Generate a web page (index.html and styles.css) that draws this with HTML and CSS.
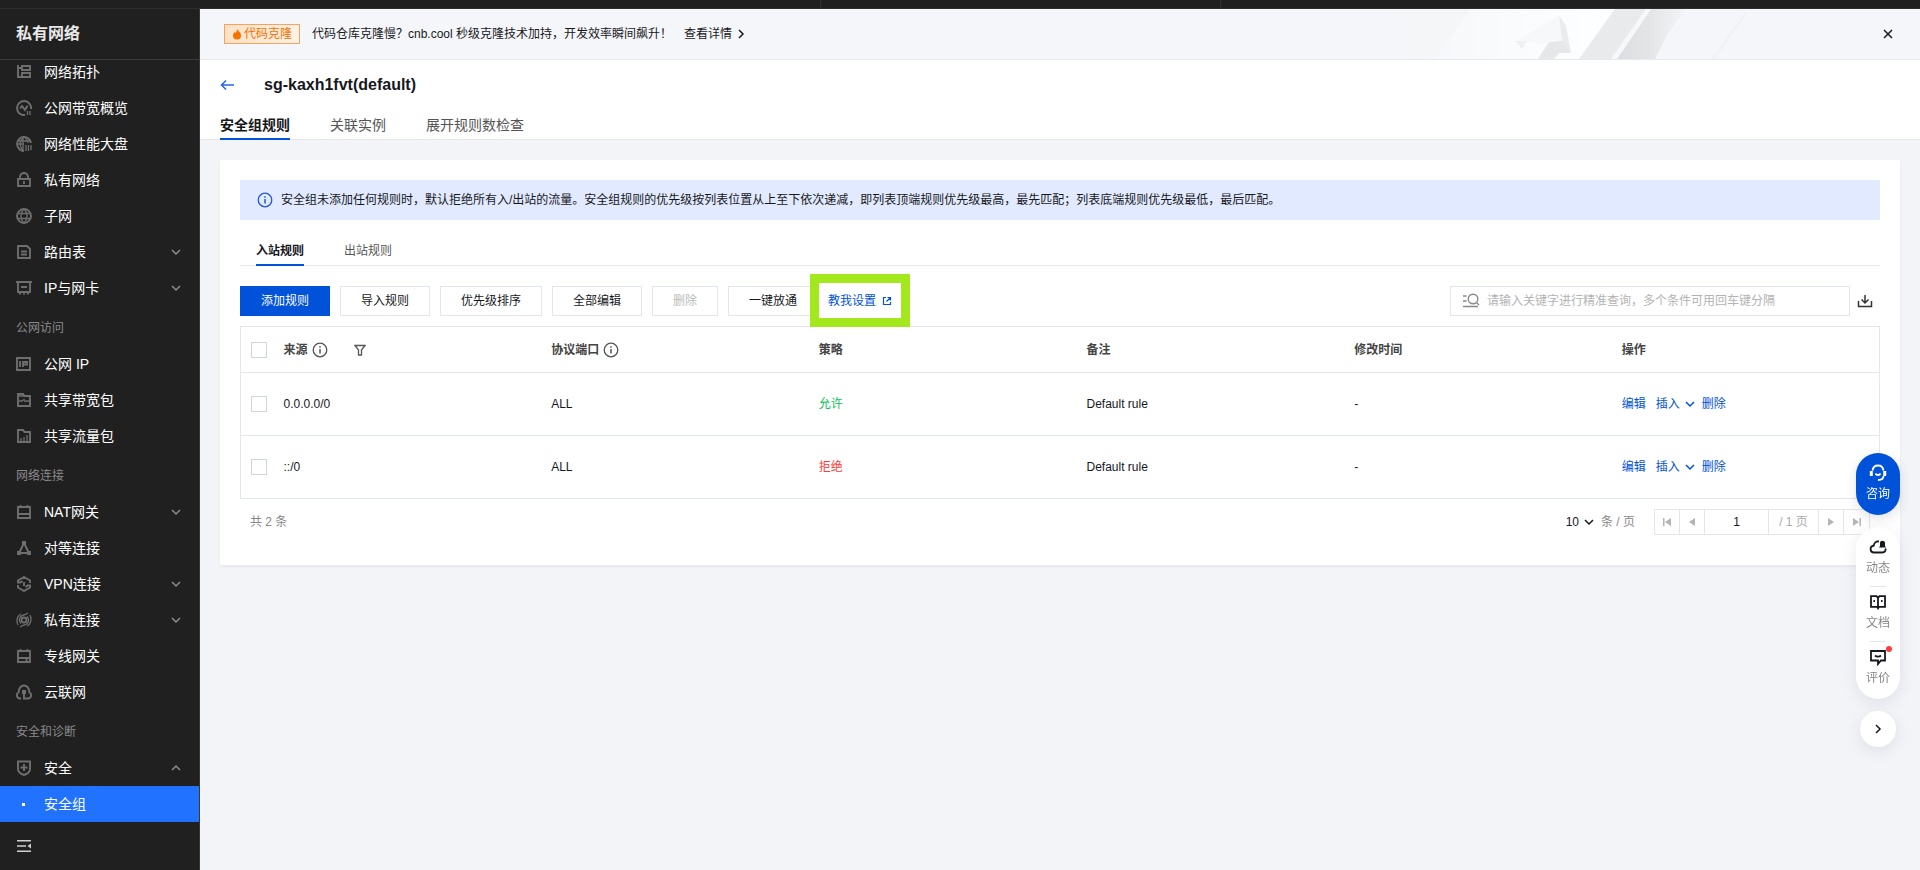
FILE: index.html
```html
<!DOCTYPE html>
<html lang="zh-CN">
<head>
<meta charset="utf-8">
<title>安全组规则 - 私有网络</title>
<link rel="stylesheet" href="styles.css">
</head>
<body>
<svg class="sprite" aria-hidden="true">
  <symbol id="chev-down" viewBox="0 0 10 10"><path d="M1 3l4 4 4-4" fill="none" stroke="currentColor" stroke-width="1.5"/></symbol>
  <symbol id="info" viewBox="0 0 16 16"><circle cx="8" cy="8" r="6.8" fill="none" stroke="currentColor" stroke-width="1.3"/><path d="M8 7v4.5M8 4.3v1.4" stroke="currentColor" stroke-width="1.5"/></symbol>
</svg>
<div class="topbar"><div class="topbar-search"></div></div>
<div class="shell">
  <aside class="sidebar">
    <h2 class="sidebar-title">私有网络</h2>
    <nav class="nav">
      <div class="nav-list">
        <a class="nav-item" href="#"><svg class="nav-icon" viewBox="0 0 16 16"><path d="M2 1v12h4M2 4h4M6 2h8v4H6zM6 9h8v4H6z"/></svg><span>网络拓扑</span></a>
        <a class="nav-item" href="#"><svg class="nav-icon" viewBox="0 0 16 16"><path d="M9 15A7 7 0 1 1 15 9M4 8.500l2-2.500 3 4 2-3.500h1"/><path class="thin" d="M11.500 11v4M14 11v4"/></svg><span>公网带宽概览</span></a>
        <a class="nav-item" href="#"><svg class="nav-icon" viewBox="0 0 16 16"><path d="M8 15A7 7 0 1 1 15 7"/><path class="thin" d="M7 1v14M1 8h7M8 1c-5 4-5 10 0 14M8 1c3 2 4 4 4 6M2 5h12M10 9v6M12.500 9v6M15 9v5"/></svg><span>网络性能大盘</span></a>
        <a class="nav-item" href="#"><svg class="nav-icon" viewBox="0 0 16 16"><path d="M2 7h12v7H2zM4 6.500V5a4 4 0 0 1 8 0v1.500M8 9v3"/></svg><span>私有网络</span></a>
        <a class="nav-item" href="#"><svg class="nav-icon" viewBox="0 0 16 16"><path d="M8 1a7 7 0 1 1 0 14A7 7 0 0 1 8 1z"/><path class="thin" d="M8 1c-4 4-4 10 0 14M8 1c4 4 4 10 0 14M1.500 5.500h13M1.500 10.500h13"/></svg><span>子网</span></a>
        <a class="nav-item" href="#"><svg class="nav-icon" viewBox="0 0 16 16"><path d="M2 2h9l3 3v9H2zM5 7.500h6M5 10.500h6"/></svg><span>路由表</span><svg class="nav-arrow"><use href="#chev-down"/></svg></a>
        <a class="nav-item" href="#"><svg class="nav-icon" viewBox="0 0 16 16"><path d="M0 2h16M2 2v10h12V2M5 7h6M4 12v2.500M8 12v2.500M12 12v2.500"/></svg><span>IP与网卡</span><svg class="nav-arrow"><use href="#chev-down"/></svg></a>
        <h3 class="nav-heading">公网访问</h3>
        <a class="nav-item" href="#"><svg class="nav-icon" viewBox="0 0 16 16"><path d="M1 2h13v12H1zM4 5v6M7 11V6h4v2.500H7"/></svg><span>公网 IP</span></a>
        <a class="nav-item" href="#"><svg class="nav-icon" viewBox="0 0 16 16"><path d="M2 2h5l1.500 2H14v10H2z"/><path class="thin" d="M2 4h6M2 9h4l2-1.500 1 2L10.500 9H14"/></svg><span>共享带宽包</span></a>
        <a class="nav-item" href="#"><svg class="nav-icon" viewBox="0 0 16 16"><path d="M2 2h5l1.500 2H14v10H2z"/><path class="thin" d="M5 10v3M8 9v4M11 7v6"/></svg><span>共享流量包</span></a>
        <h3 class="nav-heading">网络连接</h3>
        <a class="nav-item" href="#"><svg class="nav-icon" viewBox="0 0 16 16"><path d="M2 3h12v11H2zM4.500 1v2M11.500 1v2M2 10h12"/></svg><span>NAT网关</span><svg class="nav-arrow"><use href="#chev-down"/></svg></a>
        <a class="nav-item" href="#"><svg class="nav-icon" viewBox="0 0 16 16"><path d="M8 3L3 13h10L8 3"/><path class="solid" d="M6 1h4v4H6zM1 11h4v4H1zM11 11h4v4h-4z"/></svg><span>对等连接</span></a>
        <a class="nav-item" href="#"><svg class="nav-icon" viewBox="0 0 16 16"><path d="M2 6V4.500L8 1l6 3.500V7M14 10v1.500L8 15l-6-3.500V9M1 6.500h3.500l2-1.500M15 9.500h-3.500l-2 1.500M8 6v4"/></svg><span>VPN连接</span><svg class="nav-arrow"><use href="#chev-down"/></svg></a>
        <a class="nav-item" href="#"><svg class="nav-icon" viewBox="0 0 16 16"><circle cx="8" cy="8" r="2.500"/><path class="thin" d="M5 11.500A5 5 0 0 1 8 3l4-2M11 4.500A5 5 0 0 1 8 13l-4 2M2 13C0 9 1 4 5 2M14 3c2 4 1 9-3 11"/></svg><span>私有连接</span><svg class="nav-arrow"><use href="#chev-down"/></svg></a>
        <a class="nav-item" href="#"><svg class="nav-icon" viewBox="0 0 16 16"><path d="M2 3h12v11H2zM4.500 1v2M11.500 1v2M2 10h12M10.500 10v4"/></svg><span>专线网关</span></a>
        <a class="nav-item" href="#"><svg class="nav-icon" viewBox="0 0 16 16"><path d="M5 14.500H4A3.200 3.200 0 0 1 2.500 8.500C3 4 5 1.500 8 1.500s5 2.500 5.500 7a3.200 3.200 0 0 1-1.500 6H8V9"/><path class="solid" d="M6 6h4v4H6z"/></svg><span>云联网</span></a>
        <h3 class="nav-heading">安全和诊断</h3>
        <a class="nav-item" href="#"><svg class="nav-icon" viewBox="0 0 16 16"><path d="M2 1.500h12V9c0 3-3 5-6 6-3-1-6-3-6-6zM8 4v7M4.500 7.500h7"/></svg><span>安全</span><svg class="nav-arrow up"><use href="#chev-down"/></svg></a>
        <a class="nav-item active" href="#" aria-current="page"><i class="nav-dot"></i><span>安全组</span></a>
      </div>
    </nav>
    <button class="collapse" aria-label="收起菜单"><svg viewBox="0 0 16 16" width="16" height="16"><path d="M1 2.800h14M1 13.200h14M1 8h9" stroke="currentColor" stroke-width="1.400"/><path d="M15 5.500v5L11.500 8z" fill="currentColor"/></svg></button>
  </aside>

  <main class="main">
    <section class="banner">
      <svg class="banner-art" viewBox="0 0 350 50" aria-hidden="true">
        <defs>
          <linearGradient id="glow"><stop offset="0" stop-color="#f5f6f9"/><stop offset=".4" stop-color="#f8fafc"/><stop offset=".9" stop-color="#fdfeff"/><stop offset="1" stop-color="#fcfdfe"/></linearGradient>
          <linearGradient id="shade"><stop offset="0" stop-color="#dcdde0"/><stop offset=".45" stop-color="#e4e5e7"/><stop offset="1" stop-color="#f5f6f9"/></linearGradient>
        </defs>
        <path d="M0 0h215L180 50H0z" fill="url(#glow)"/>
        <path d="M251 0h38q-12 8-24 30l-10 20h-38z" fill="url(#shade)"/>
        <path d="M215 0h31L211 50H179z" fill="#e9eaec"/>
        <path d="M246 0h5L217 50h-6z" fill="#f7f8fa"/>
        <path d="M117 32l42-26 5 29-11-3-9 3z" fill="#f6f8f9"/>
        <path d="M159 6l7 11 5 27-9-12z" fill="#e9ebec"/>
        <path d="M149 33l13-1 9 12h-12l-5 6h-16z" fill="#e5e7e8"/>
        <path d="M115 32h12l-5 8z" fill="#eef0f1"/>
        <path d="M346 4L313 50" stroke="#f0f1f4" stroke-width="2"/>
        <path d="M70 0L35 50H0V0z" fill="#f5f6f8"/>
      </svg>
      <span class="tag"><svg viewBox="0 0 10 12" width="10" height="12"><path d="M5 1c1 2 4 3 4 6.500A4 4 0 0 1 1 7.500C1 6 2 5 2.500 4l1 1C4.500 4 5 3 5 1z" fill="#f57200"/></svg>代码克隆</span>
      <span class="banner-text">代码仓库克隆慢？cnb.cool 秒级克隆技术加持，开发效率瞬间飙升！</span>
      <a class="banner-link" href="#">查看详情<svg viewBox="0 0 10 10" width="10" height="10"><path d="M3 1l4 4-4 4" fill="none" stroke="currentColor" stroke-width="1.500"/></svg></a>
      <button class="banner-close" aria-label="关闭"><svg viewBox="0 0 10 10" width="10" height="10"><path d="M1 1l8 8M9 1L1 9" stroke="currentColor" stroke-width="1.500"/></svg></button>
    </section>

    <header class="page-head">
      <div class="head-row">
        <a class="back" href="#" aria-label="返回"><svg viewBox="0 0 14 12" width="14" height="12"><path d="M14 6H2M6 1.500L1.500 6 6 10.500" fill="none" stroke="currentColor" stroke-width="1.500"/></svg></a>
        <h1>sg-kaxh1fvt(default)</h1>
      </div>
      <nav class="tabs">
        <a class="tab on" href="#">安全组规则</a>
        <a class="tab" href="#">关联实例</a>
        <a class="tab" href="#">展开规则数检查</a>
      </nav>
    </header>

    <section class="card">
      <div class="alert"><svg width="16" height="16"><use href="#info"/></svg><span>安全组未添加任何规则时，默认拒绝所有入/出站的流量。安全组规则的优先级按列表位置从上至下依次递减，即列表顶端规则优先级最高，最先匹配；列表底端规则优先级最低，最后匹配。</span></div>
      <nav class="tabs subtabs">
        <a class="tab on" href="#">入站规则</a>
        <a class="tab" href="#">出站规则</a>
      </nav>
      <div class="toolbar">
        <button class="btn primary">添加规则</button>
        <button class="btn">导入规则</button>
        <button class="btn">优先级排序</button>
        <button class="btn">全部编辑</button>
        <button class="btn" disabled>删除</button>
        <button class="btn">一键放通</button>
        <a class="help" href="#">教我设置<svg viewBox="0 0 10 10" width="10" height="10"><path d="M4 1.500H1.500v7h7V6M5.500 1.500h3v3M8.500 1.500L4.500 5.500" fill="none" stroke="currentColor" stroke-width="1.200"/></svg></a>
        <div class="search">
          <svg viewBox="0 0 18 16" width="18" height="16"><circle cx="11" cy="6" r="4.800"/><path d="M14.500 9.500l2.500 2.500M1 3h3.500M1 8h3.500M1 13.500h15"/></svg>
          <input type="text" aria-label="搜索规则" placeholder="请输入关键字进行精准查询，多个条件可用回车键分隔">
        </div>
        <button class="download" aria-label="下载"><svg viewBox="0 0 16 14" width="16" height="14"><path d="M8 1v8M4.500 5.500L8 9l3.500-3.500M1.500 7v5.500h13V7" fill="none" stroke="currentColor" stroke-width="1.500"/></svg></button>
      </div>
      <table class="rules">
        <colgroup><col class="col-check"><col><col><col><col><col><col></colgroup>
        <thead>
          <tr>
            <th><input type="checkbox" aria-label="全选"></th>
            <th><div class="th-row">来源<svg width="16" height="16"><use href="#info"/></svg><svg class="filter" viewBox="0 0 12 12" width="12" height="12"><path d="M1 1.500h10L7.500 6v5h-3V6z" fill="none" stroke="currentColor" stroke-width="1.300"/></svg></div></th>
            <th><div class="th-row">协议端口<svg width="16" height="16"><use href="#info"/></svg></div></th>
            <th>策略</th><th>备注</th><th>修改时间</th><th>操作</th>
          </tr>
        </thead>
        <tbody>
          <tr>
            <td><input type="checkbox" aria-label="选择 0.0.0.0/0"></td><td>0.0.0.0/0</td><td>ALL</td><td class="allow">允许</td><td>Default rule</td><td>-</td>
            <td><div class="ops"><a href="#">编辑</a><a href="#">插入<svg width="10" height="10"><use href="#chev-down"/></svg></a><a href="#">删除</a></div></td>
          </tr>
          <tr>
            <td><input type="checkbox" aria-label="选择 ::/0"></td><td>::/0</td><td>ALL</td><td class="deny">拒绝</td><td>Default rule</td><td>-</td>
            <td><div class="ops"><a href="#">编辑</a><a href="#">插入<svg width="10" height="10"><use href="#chev-down"/></svg></a><a href="#">删除</a></div></td>
          </tr>
        </tbody>
      </table>
      <footer class="paging">
        <span class="total">共 2 条</span>
        <button class="size" aria-label="每页条数">10<svg width="10" height="10"><use href="#chev-down"/></svg></button>
        <span class="unit">条 / 页</span>
        <div class="pager">
          <button aria-label="首页"><svg viewBox="0 0 8 8" width="8" height="8"><path d="M0 0h1.500v8H0zM8 0v8L2 4z"/></svg></button>
          <button aria-label="上一页"><svg viewBox="0 0 8 8" width="8" height="8"><path d="M7 0v8L1 4z"/></svg></button>
          <input type="text" aria-label="页码" value="1">
          <span>/ 1 页</span>
          <button aria-label="下一页"><svg viewBox="0 0 8 8" width="8" height="8"><path d="M1 0v8l6-4z"/></svg></button>
          <button aria-label="末页"><svg viewBox="0 0 8 8" width="8" height="8"><path d="M6.500 0H8v8H6.500zM0 0v8l6-4z"/></svg></button>
        </div>
      </footer>
    </section>
  </main>
</div>

<aside class="float">
  <button class="consult"><svg viewBox="0 0 18 18" width="18" height="18"><path d="M3.500 6.500C4 3 6 1.500 9 1.500s5 1.500 5.500 5M14.500 12c0 3-2 4-5.500 4M6.500 9.500c1 2 4 2 5 0"/><path class="thick" d="M2.300 7v5M15.700 7v5"/></svg>咨询</button>
  <div class="float-group">
    <button><svg viewBox="0 0 18 18" width="18" height="18"><path d="M10 3.500C7 3 5 5 4.800 7.500 0 8.500 1 14.500 5 14.500h8c3.500 0 4-2.500 3.300-4"/><path class="fill" d="M11 8V5c0-3 5-3 5 0v3l1 1.500h-7z"/></svg>动态</button>
    <button><svg viewBox="0 0 18 18" width="18" height="18"><path d="M9 4.500L7.500 3.200H2v10.600h6l1 1.500 1-1.500h6V3.200h-5.500zM9 4.500V15M4.500 8H6M12 8h1.500"/></svg>文档</button>
    <button><i class="badge"></i><svg viewBox="0 0 18 18" width="18" height="18"><path d="M2 3h14v9.500h-4L9 16v-3.500H2zM6 7.500c1.500 1.500 4.500 1.500 6 0"/></svg>评价</button>
  </div>
  <button class="fold" aria-label="收起"><svg viewBox="0 0 10 10" width="10" height="10"><path d="M3 1l4 4-4 4" fill="none" stroke="currentColor" stroke-width="1.500"/></svg></button>
</aside>
</body>
</html>
```
FILE: styles.css
```css
* { box-sizing: border-box; }
html, body { height: 100%; }
body {
  margin: 0;
  display: flex;
  flex-direction: column;
  overflow: hidden;
  background: #f3f4f8;
  color: #16181d;
  font: 12px/18px "Liberation Sans", "Noto Sans CJK SC", sans-serif;
}
a { color: inherit; text-decoration: none; }
button, input { font: inherit; color: inherit; }
button { border: 0; padding: 0; background: none; cursor: pointer; }
svg { flex: none; display: block; }
h1, h2, h3 { margin: 0; }
.sprite { position: absolute; width: 0; height: 0; }

.topbar {
  flex: none;
  display: flex;
  justify-content: flex-end;
  height: 9px;
  padding-right: 699px;
  background: #202020;
  border-bottom: 1px solid #2e2e2e;
}
.topbar-search { width: 401px; border: solid #2e2e2e; border-width: 0 1px; }
.shell { flex: 1; display: flex; min-height: 0; }

/* Sidebar */
.sidebar {
  flex: none;
  width: 200px;
  display: flex;
  flex-direction: column;
  background: #202020;
  border-right: 1px solid #3a3734;
  color: #fff;
}
.sidebar-title {
  flex: none;
  padding: 13px 16px;
  border-bottom: 1px solid #3b3b3b;
  font-size: 16px;
  line-height: 24px;
  color: #e8e8e8;
}
.nav { flex: 1; overflow: hidden; }
.nav-list { margin-top: -6px; }
.nav-item {
  display: flex;
  align-items: center;
  gap: 12px;
  height: 36px;
  padding: 0 18px 0 16px;
  font-size: 14px;
}
.nav-icon { width: 16px; height: 16px; fill: none; stroke: #6e6e6e; stroke-width: 1.9; }
.nav-icon .thin { stroke-width: 1.3; }
.nav-icon .solid { fill: #6e6e6e; stroke: none; }
.nav-arrow { width: 10px; height: 10px; margin-left: auto; color: #8c8c8c; }
.nav-arrow.up { transform: rotate(180deg); }
.nav-heading {
  height: 40px;
  padding: 13px 16px 0;
  font-size: 12px;
  font-weight: 400;
  color: #8a8a8a;
}
.nav-item.active { background: #2173ff; }
.nav-dot { width: 3px; height: 3px; margin: 0 7px 0 6px; background: #fff; }
.collapse { flex: none; height: 48px; padding: 0 16px; color: #d0d0d0; }

/* Main column */
.main { flex: 1; min-width: 0; overflow: hidden; }
.banner {
  position: relative;
  display: flex;
  align-items: center;
  height: 51px;
  padding: 0 24px;
  background: #f5f6f9;
  border-bottom: 1px solid #e7e9ee;
}
.banner > * { position: relative; }
.banner .banner-art { position: absolute; top: 0; right: 170px; width: 350px; height: 50px; }
.tag {
  display: flex;
  align-items: center;
  gap: 2px;
  height: 20px;
  padding: 0 7px;
  margin-right: 12px;
  border: 1px solid #f7a35c;
  background: linear-gradient(90deg, #ffe1c6, #fff1e4);
  color: #f57200;
}
.banner-link { display: flex; align-items: center; gap: 4px; margin-left: 12px; }
.banner-close { margin-left: auto; padding: 3px; }

.page-head { background: #fff; padding: 12px 20px 0; border-bottom: 1px solid #e5e7ed; }
.head-row { display: flex; align-items: center; gap: 30px; height: 26px; }
.back { color: #2468e5; }
h1 { font-size: 16px; line-height: 26px; }
.tabs { display: flex; gap: 40px; font-size: 14px; color: #555; }
.tab { line-height: 22px; padding-bottom: 2px; border-bottom: 2px solid transparent; margin-bottom: -1px; }
.tab.on { font-weight: 700; color: #16181d; border-bottom-color: #0052d9; }
.page-head .tabs { padding-top: 16px; }

.card {
  margin: 20px;
  padding: 20px;
  background: #fff;
  box-shadow: 0 2px 3px rgba(54, 58, 80, .06);
}
.alert {
  display: flex;
  align-items: center;
  gap: 8px;
  min-height: 40px;
  padding: 0 17px;
  background: #e1eafe;
}
.alert svg { color: #2458d0; }
.subtabs { padding: 20px 16px 0; border-bottom: 1px solid #e7e8f0; font-size: 12px; }

/* Toolbar */
.toolbar { display: flex; align-items: center; gap: 10px; margin: 20px 0 10px; }
.btn { height: 30px; padding: 0 20px; border: 1px solid #e3e6ef; background: #fff; }
.btn.primary { background: #0052d9; border-color: #0052d9; color: #fff; }
.btn:disabled { color: #bbb; }
.help { position: relative; display: flex; align-items: center; gap: 6px; color: #0052d9; }
.help::after {
  content: "";
  position: absolute;
  inset: -18px -18px -17px -18px;
  border: 9px solid #a3e81c;
}
.search {
  display: flex;
  align-items: center;
  gap: 7px;
  width: 400px;
  height: 30px;
  margin-left: auto;
  padding: 0 11px;
  border: 1px solid #e3e6ef;
}
.search svg { fill: none; stroke: #888; stroke-width: 1.4; }
.search input { flex: 1; min-width: 0; padding: 0; border: 0; outline: 0; background: none; }
.search input::placeholder { color: #b3b3b3; }
.download { width: 30px; height: 30px; margin-left: -10px; padding-left: 7px; color: #333; }

/* Rules table */
.rules { width: 100%; table-layout: fixed; border-collapse: collapse; border: 1px solid #e3e6ef; }
.col-check { width: 33px; }
.rules tr { border-bottom: 1px solid #e3e6ef; }
.rules th { height: 46px; padding: 0 10px; text-align: left; color: #444; }
.rules td { height: 63px; padding: 0 10px; }
.rules input {
  appearance: none;
  display: block;
  width: 16px;
  height: 16px;
  margin: 0;
  border: 1px solid #d0d4e0;
  background: #fff;
}
.th-row { display: flex; align-items: center; gap: 4px; }
.th-row svg { color: #555; }
.th-row .filter { margin-left: 22px; }
.allow { color: #0abf5b; }
.deny { color: #ff3a3a; }
.ops { display: flex; gap: 10px; color: #0052d9; }
.ops a { display: flex; align-items: center; gap: 5px; }
.ops a:last-child { margin-left: -3px; }

/* Pagination */
.paging { display: flex; align-items: center; padding: 10px; color: #888; }
.size { display: flex; align-items: center; gap: 5px; margin-left: auto; color: #16181d; }
.unit { margin: 0 19px 0 7px; }
.pager { display: flex; height: 26px; border: 1px solid #e3e6ef; }
.pager > * { display: flex; align-items: center; justify-content: center; width: 25px; }
.pager > * + * { border: 0; border-left: 1px solid #e3e6ef; }
.pager > :first-child { width: 24px; }
.pager > :last-child { width: 26px; }
.pager input { width: 64px; padding: 0; color: #16181d; text-align: center; outline: 0; }
.pager span { width: 50px; color: #aaa; }
.pager svg { fill: #b4b4b4; }

/* Floating help */
.float {
  position: fixed;
  right: 20px;
  bottom: 123px;
  width: 44px;
  display: flex;
  flex-direction: column;
  align-items: center;
  gap: 12px;
}
.float button { position: relative; display: flex; flex-direction: column; align-items: center; }
.float svg { fill: none; stroke: currentColor; stroke-width: 1.8; }
.float .thick { stroke-width: 3; }
.float .fill { fill: currentColor; stroke: none; }
.consult {
  width: 44px;
  height: 62px;
  padding-top: 11px;
  gap: 3px;
  border-radius: 22px;
  background: #0052d9;
  color: #fff;
  box-shadow: 0 4px 12px rgba(54, 58, 80, .14);
}
.float-group { width: 44px; padding: 4px 0 3px; border-radius: 22px; background: #fff; box-shadow: 0 4px 16px rgba(54, 58, 80, .1); }
.float-group button { width: 24px; height: 55px; margin: 0 auto; padding-top: 7px; gap: 3px; color: #888; }
.float-group button + button { background: linear-gradient(#e3e6ef, #e3e6ef) center top / 16px 1px no-repeat; }
.float-group svg { color: #16181d; }
.badge { position: absolute; top: 5px; right: -2px; width: 6px; height: 6px; border-radius: 50%; background: #ff3a3a; }
.float .fold {
  width: 36px;
  height: 36px;
  justify-content: center;
  border-radius: 50%;
  background: #fff;
  box-shadow: 0 4px 16px rgba(54, 58, 80, .1);
}
```
